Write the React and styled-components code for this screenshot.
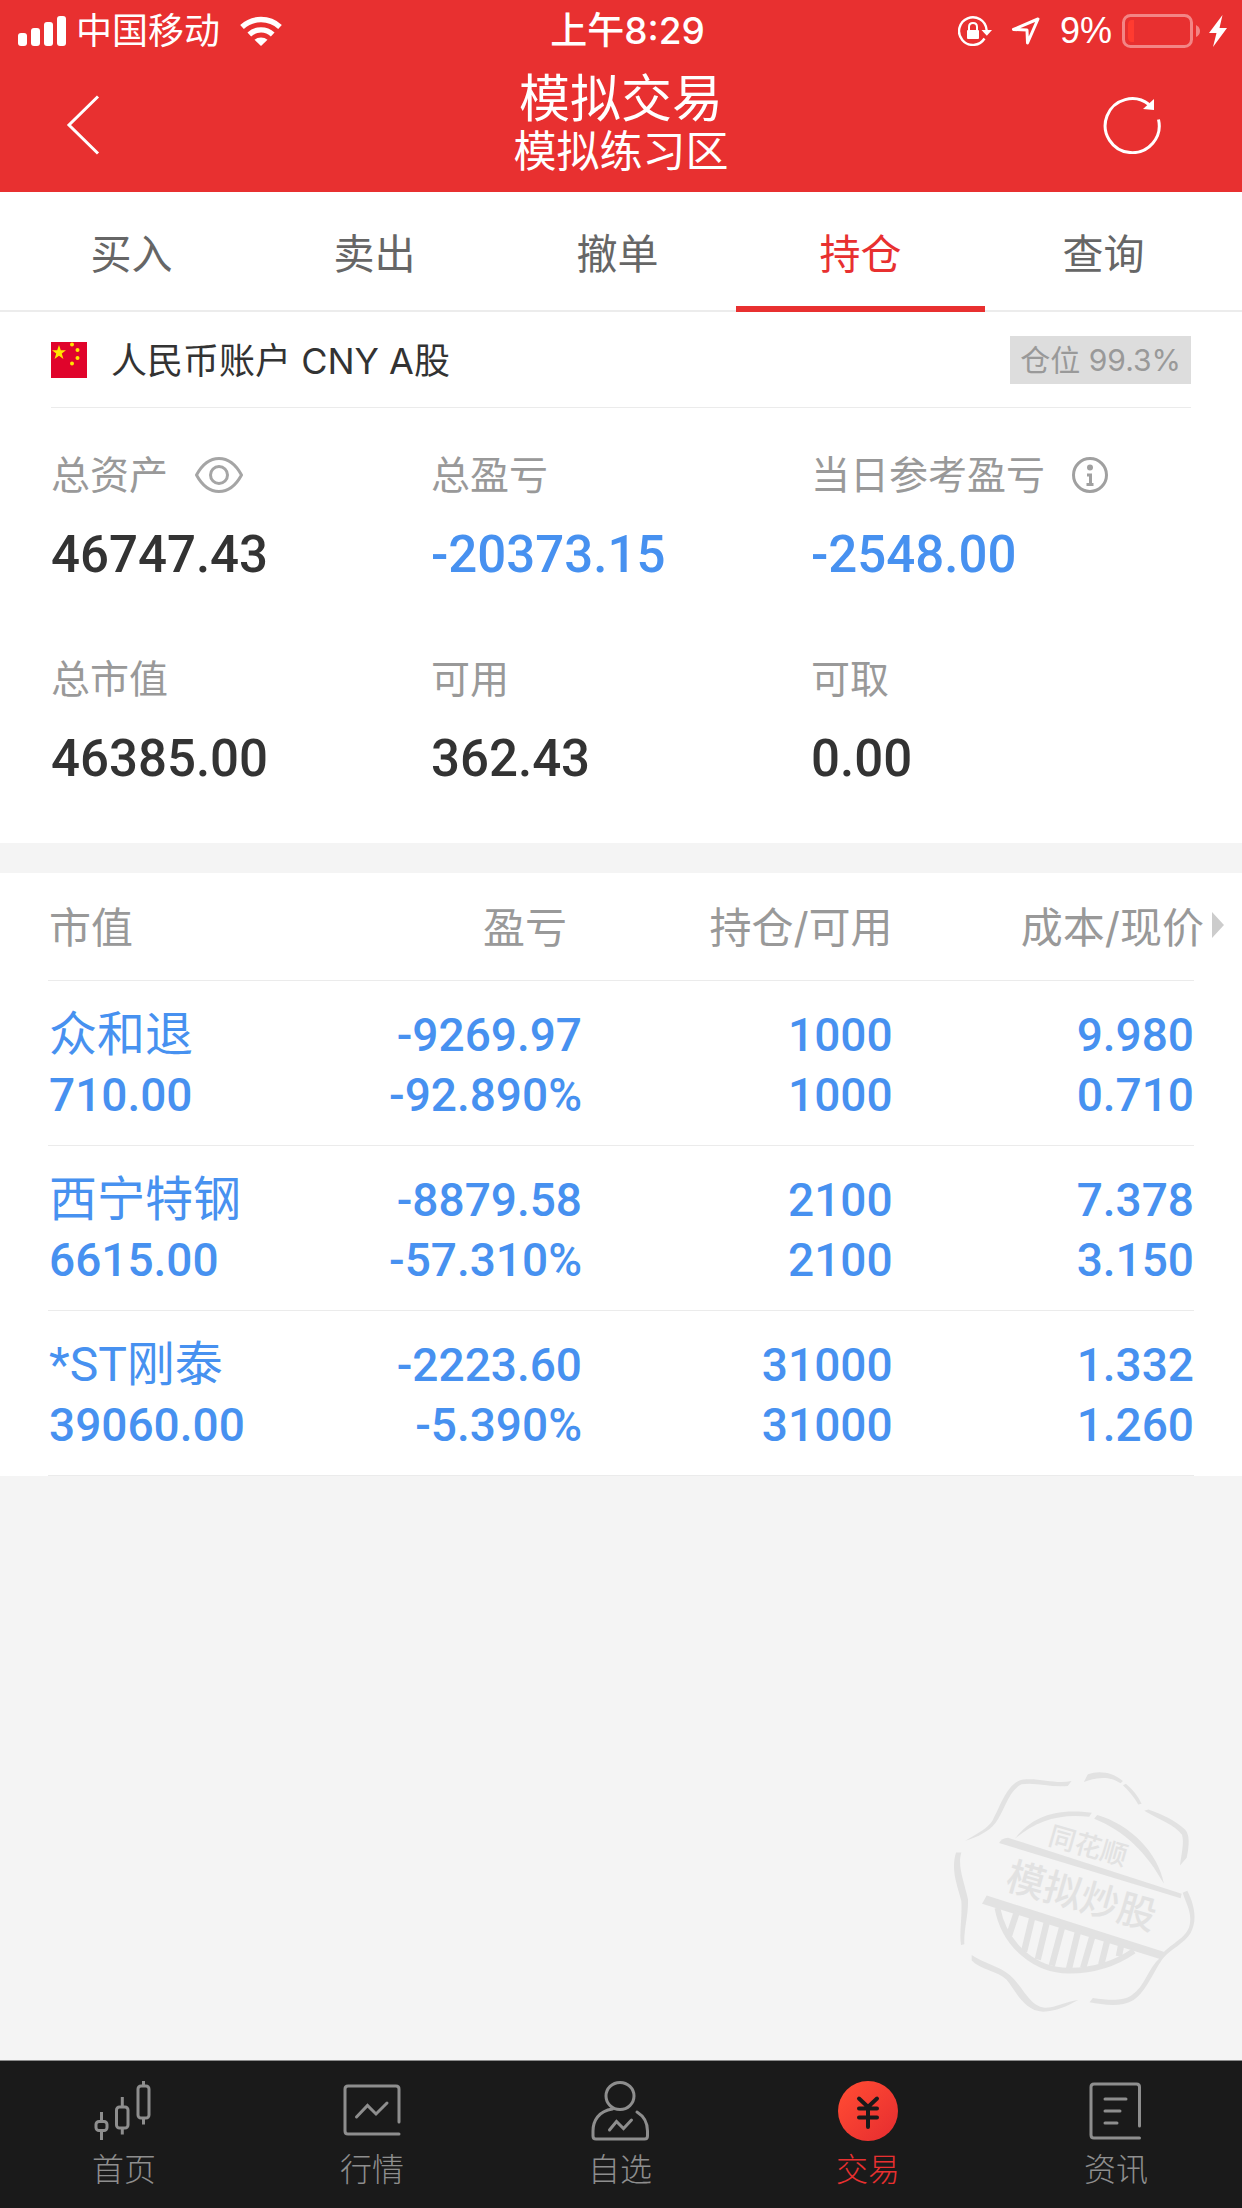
import React from 'react'
import styled, { createGlobalStyle } from 'styled-components'

const tabs = ['买入', '卖出', '撤单', '持仓', '查询']

const stocks = [
  { name: '众和退', value: '710.00', profit: '-9269.97', rate: '-92.890%', hold: '1000', usable: '1000', cost: '9.980', price: '0.710' },
  { name: '西宁特钢', value: '6615.00', profit: '-8879.58', rate: '-57.310%', hold: '2100', usable: '2100', cost: '7.378', price: '3.150' },
  { name: '*ST刚泰', value: '39060.00', profit: '-2223.60', rate: '-5.390%', hold: '31000', usable: '31000', cost: '1.332', price: '1.260' },
]

export default function App() {
  return (
    <>
      <GlobalStyle />
      <Page>
        <Header>
          <StatusBar />
          <TitleBar>
            <IconButton aria-label="返回">
              <BackIcon />
            </IconButton>
            <Titles>
              <Title>模拟交易</Title>
              <SubTitle>模拟练习区</SubTitle>
            </Titles>
            <IconButton aria-label="刷新" $right>
              <RefreshIcon />
            </IconButton>
          </TitleBar>
        </Header>

        <Tabs>
          {tabs.map((tab) => (
            <Tab key={tab} $active={tab === '持仓'}>{tab}</Tab>
          ))}
        </Tabs>

        <Summary>
          <Account>
            <Flag />
            <AccountName>人民币账户 CNY A股</AccountName>
            <Badge>仓位 99.3%</Badge>
          </Account>
          <Figures>
            <Figure label="总资产" value="46747.43" icon={<PlainButton aria-label="隐藏金额"><EyeIcon /></PlainButton>} />
            <Figure label="总盈亏" value="-20373.15" blue />
            <Figure label="当日参考盈亏" value="-2548.00" blue icon={<PlainButton aria-label="说明"><InfoIcon /></PlainButton>} />
            <Figure label="总市值" value="46385.00" />
            <Figure label="可用" value="362.43" />
            <Figure label="可取" value="0.00" />
          </Figures>
        </Summary>

        <Holdings>
          <Table>
            <thead>
              <tr>
                <HeadCell $width="22%" $left>市值</HeadCell>
                <HeadCell $width="24.6%" $gap="15px">盈亏</HeadCell>
                <HeadCell $width="27.1%">持仓/可用</HeadCell>
                <HeadCell>
                  <MoreButton>
                    成本/现价
                    <svg width="12" height="26" viewBox="0 0 12 26" fill="#ccc"><path d="M0 0L12 13L0 26Z" /></svg>
                  </MoreButton>
                </HeadCell>
              </tr>
            </thead>
            <tbody>
              {stocks.map((s) => (
                <tr key={s.name}>
                  <Cell $left>
                    <StockName>{s.name}</StockName>
                    <Num>{s.value}</Num>
                  </Cell>
                  <Cell><Num>{s.profit}</Num><Num>{s.rate}</Num></Cell>
                  <Cell><Num>{s.hold}</Num><Num>{s.usable}</Num></Cell>
                  <Cell><Num>{s.cost}</Num><Num>{s.price}</Num></Cell>
                </tr>
              ))}
            </tbody>
          </Table>
        </Holdings>

        <Rest>
          <Stamp />
        </Rest>

        <BottomNav>
          <NavItem href="#home"><HomeIcon />首页</NavItem>
          <NavItem href="#market"><MarketIcon />行情</NavItem>
          <NavItem href="#mine"><MineIcon />自选</NavItem>
          <NavItem href="#trade" $active><TradeIcon />交易</NavItem>
          <NavItem href="#news"><NewsIcon />资讯</NavItem>
        </BottomNav>
      </Page>
    </>
  )
}

function Figure({ label, value, icon, blue }) {
  return (
    <FigureItem>
      <FigureLabel>{label}{icon}</FigureLabel>
      <FigureValue $blue={blue}>{value}</FigureValue>
    </FigureItem>
  )
}

function StatusBar() {
  return (
    <Status>
      <StatusSide>
        <svg width="48" height="30" viewBox="0 0 48 30" fill="#fff">
          <rect x="0" y="17" width="9" height="13" rx="3" />
          <rect x="13" y="12" width="9" height="18" rx="3" />
          <rect x="26" y="6" width="9" height="24" rx="3" />
          <rect x="39" y="0" width="9" height="30" rx="3" />
        </svg>
        <Carrier>中国移动</Carrier>
        <svg width="42" height="30" viewBox="0 0 42 30" fill="none" stroke="#fff" strokeWidth="5.4">
          <path d="M2 11A28 28 0 0 1 40 11" />
          <path d="M9.300 18.500A17 17 0 0 1 32.700 18.500" />
          <path d="M21 30L14.500 23.800A10 10 0 0 1 27.500 23.800Z" fill="#fff" stroke="none" />
        </svg>
      </StatusSide>
      <Time>上午8:29</Time>
      <StatusSide $right>
        <svg width="34" height="30" viewBox="0 0 34 30" fill="none" stroke="#fff" strokeWidth="2.400">
          <path d="M28.600 14A13.800 13.800 0 1 0 26.500 22.500" />
          <path d="M23.500 14H34L28.800 19.800Z" fill="#fff" stroke="none" />
          <rect x="9" y="14" width="12" height="9" rx="1" fill="#fff" stroke="none" />
          <path d="M11 14.500V11Q11 7 15 7Q19 7 19 11V14.500" strokeWidth="2" />
        </svg>
        <Arrow width="28" height="28" viewBox="0 0 28 28" fill="none" stroke="#fff" strokeWidth="3" strokeLinejoin="round">
          <path d="M26 2L1.500 12.500L15 13L15.500 26Z" />
        </Arrow>
        <Percent>9%</Percent>
        <svg width="79" height="34" viewBox="0 0 79 34">
          <rect x="1.500" y="1.500" width="68" height="31" rx="7" fill="none" stroke="#f38585" strokeWidth="3" />
          <path d="M12 6V28H10Q6 28 6 23V11Q6 6 10 6Z" fill="#ff3b30" />
          <path d="M74 11Q78 13 78 17Q78 21 74 23Z" fill="#f38585" />
        </svg>
        <Bolt width="18" height="32" viewBox="0 0 18 32" fill="#fff">
          <path d="M13.500 0L0 18H7.500L4 32L18 13H10.500Z" />
        </Bolt>
      </StatusSide>
    </Status>
  )
}

const BackIcon = () => (
  <svg width="34" height="60" viewBox="0 0 34 60" fill="none" stroke="#fff" strokeWidth="3">
    <path d="M32 1.500L3 30L32 58.500" />
  </svg>
)

const RefreshIcon = () => (
  <svg width="58" height="58" viewBox="0 0 58 58" fill="none" stroke="#fff" strokeWidth="3">
    <path d="M55.500 23.500A27 27 0 1 1 46 8.500" />
    <path d="M51 3V14L40 13Z" fill="#fff" stroke="none" />
  </svg>
)

const EyeIcon = () => (
  <svg width="48" height="36" viewBox="0 0 48 36" fill="none" stroke="#a5a5a5" strokeWidth="3">
    <path d="M1.500 18C8 6 16 1.500 24 1.500S40 6 46.500 18C40 30 32 34.500 24 34.500S8 30 1.500 18Z" strokeLinejoin="round" />
    <circle cx="24" cy="18" r="8.500" />
  </svg>
)

const InfoIcon = () => (
  <svg width="36" height="36" viewBox="0 0 36 36" fill="none" stroke="#a0a0a0" strokeWidth="3">
    <circle cx="18" cy="18" r="16.500" />
    <circle cx="18" cy="10.500" r="3" fill="#a0a0a0" stroke="none" />
    <path d="M15 18H18.500V27M14.500 27.500H21.500" />
  </svg>
)

const Flag = () => (
  <svg width="36" height="36" viewBox="0 0 36 36">
    <rect width="36" height="36" fill="#e0042b" />
    <g fill="#ffe600">
      <path d="M8 3L9.800 8.200H15L10.800 11.400L12.400 17L8 13.700L3.600 17L5.200 11.400L1 8.200H6.200Z" />
      <circle cx="21" cy="2.500" r="2" />
      <circle cx="26.500" cy="8" r="2" />
      <circle cx="26.500" cy="16" r="2" />
      <circle cx="21" cy="21.500" r="2" />
    </g>
  </svg>
)

const NavSvg = ({ children }) => (
  <svg width="60" height="60" viewBox="0 0 60 60" fill="none" stroke="#8e8e8e" strokeWidth="3" strokeLinecap="round">
    {children}
  </svg>
)

const HomeIcon = () => (
  <NavSvg>
    <rect x="2" y="40.500" width="11" height="9" rx="3" />
    <path d="M7.500 31V40M7.500 50V59" strokeLinecap="butt" />
    <rect x="22.500" y="26" width="11.500" height="21" rx="3" />
    <path d="M28.300 16V26M28.300 47V53.500" strokeLinecap="butt" />
    <rect x="44" y="5" width="11" height="32" rx="3" />
    <path d="M49.500 0V5M49.500 37V43.500" strokeLinecap="butt" />
  </NavSvg>
)

const MarketIcon = () => (
  <NavSvg>
    <path d="M57 41V8Q57 5 54 5H6Q3 5 3 8V50Q3 53 6 53H57" />
    <path d="M14.500 36L25.500 24.500L34 33L45 22" />
  </NavSvg>
)

const MineIcon = () => (
  <NavSvg>
    <ellipse cx="30" cy="15" rx="14" ry="13.500" />
    <path d="M22.500 28C8.500 30 3 40 3 50V55Q3 58 6 58H54.500Q57.500 58 57.500 55V50C57.500 42 53.500 35 47 31" />
    <path d="M19.500 49L26.500 40.500L33.500 47.500L41.500 39" />
  </NavSvg>
)

const TradeIcon = () => (
  <NavSvg>
    <defs>
      <linearGradient id="trade" x1="0" y1="0" x2="1" y2="1">
        <stop offset="0.100" stopColor="#ff4a33" />
        <stop offset="0.900" stopColor="#e82f30" />
      </linearGradient>
    </defs>
    <circle cx="30" cy="30" r="30" fill="url(#trade)" stroke="none" />
    <path d="M21 17.500L30 26L39 17.500M21 27.500H39M21 36.500H39M30 27V46" stroke="#1a1a1a" strokeWidth="4" />
  </NavSvg>
)

const NewsIcon = () => (
  <NavSvg>
    <path d="M53.500 45V6Q53.500 3 50.500 3H8Q5 3 5 6V54Q5 57 8 57H53.500" />
    <path d="M19 18H40M19 30H34M19 42H31" />
  </NavSvg>
)

// round paper stamp in the lower right corner
const Stamp = () => (
  <svg width="242" height="242" viewBox="70 65 725 725" fill="#e2e2e2">
    <path d="M107 274C150 248 175 235 188 214C215 165 235 90 290 90C340 88 380 105 425 95L414 110C360 115 320 98 275 105C235 125 225 185 196 222C178 245 145 262 107 274Z" />
    <path d="M462 98L474 75C510 62 550 70 579 95L572 102C540 80 505 82 462 98Z" />
    <path d="M579 108L588 103C608 120 625 140 635 163L625 165C613 145 598 125 579 108Z" />
    <path d="M643 184L655 180C700 196 735 212 765 240C780 255 778 290 770 325L750 348C755 310 763 280 756 256C735 225 685 210 643 184Z" />
    <path d="M79 309H95C82 350 105 400 115 450C116 500 102 540 104 584L94 586C88 550 98 500 95 455C85 410 62 365 79 309Z" />
    <path d="M126 616C160 640 210 650 240 676C280 712 300 770 345 774C380 774 410 755 445 751C410 770 380 785 340 786C285 783 265 735 230 690C205 665 150 660 126 633Z" />
    <path d="M479 758L489 745C530 750 575 757 605 737C645 710 655 655 690 625L703 606C735 575 775 560 780 520C785 485 765 455 758 430L772 424C800 480 798 520 782 550C765 580 720 600 700 625C670 665 650 725 610 752C570 775 520 765 479 758Z" />
    <path d="M255 268C305 205 370 175 486 190L478 202C385 192 320 215 255 268Z" />
    <path d="M493 208L502 197C600 225 685 310 702 403C650 310 585 245 493 208Z" />
    <path d="M208 281Q215 266 235 265L755 433L752 446L208 281Z" />
    <path d="M157 463L171 438L708 609L690 628Z" />
    <path d="M203 475C225 590 320 665 420 663C500 663 560 640 612 604" fill="none" stroke="#e2e2e2" strokeWidth="17" />
    <path d="M262 485L238 558M309 498L283 606M353 510L324 630M399 525L366 648M446 540L417 660M489 555L460 655M533 570L514 645M575 580L567 620" fill="none" stroke="#e2e2e2" strokeWidth="19" />
    <StampText x="352" y="284" fontSize="80" transform="rotate(16 352 284)">同花顺</StampText>
    <StampText x="223" y="416" fontSize="115" transform="rotate(16 223 416)">模拟炒股</StampText>
  </svg>
)

const GlobalStyle = createGlobalStyle`
* {
    box-sizing: border-box;
}
body {
    margin: 0;
    font-family: Inter, "Noto Sans CJK SC", sans-serif;
}
svg {
    display: block;
    flex-shrink: 0;
}
button {
    border: none;
    background: none;
    padding: 0;
    font: inherit;
    color: inherit;
}
`

const Page = styled.div`
display: flex;
flex-direction: column;
min-height: 100vh;
background-color: #f4f4f4;
`

const Header = styled.header`
background-color: #e83030;
color: #fff;
`

const Status = styled.div`
display: grid;
grid-template-columns: 1fr auto 1fr;
align-items: center;
height: 62px;
padding: 0 15px 0 18px;
font-size: 36px;
line-height: 60px;
`

const StatusSide = styled.div`
display: flex;
align-items: center;
justify-content: ${(p) => (p.$right ? 'flex-end' : 'flex-start')};
`

const Carrier = styled.span`
margin: 0 20px 0 10px;
`

const Time = styled.span`
padding-left: 10px;
font-size: 37px;
font-weight: 500;
`

const Arrow = styled.svg`
margin-left: 20px;
`

const Percent = styled.span`
margin: 0 10px 0 20px;
font-family: "Liberation Sans", sans-serif;
`

const Bolt = styled.svg`
margin-left: 8px;
`

const TitleBar = styled.div`
display: grid;
grid-template-columns: 1fr auto 1fr;
align-items: center;
height: 130px;
padding: 0 66px 4px;
`

const IconButton = styled.button`
justify-self: ${(p) => (p.$right ? 'end' : 'start')};
margin-right: ${(p) => (p.$right ? '15px' : '0')};
`

const Titles = styled.div`
text-align: center;
line-height: 52px;
`

const Title = styled.h1`
margin: 0;
font-size: 51px;
font-weight: 400;
`

const SubTitle = styled.p`
margin: 0;
font-size: 43px;
`

const Tabs = styled.nav`
display: flex;
height: 120px;
padding: 0 17px 0 10px;
background-color: #fff;
border-bottom: 2px solid #ececec;
`

const Tab = styled.button`
position: relative;
flex: 1;
font-size: 41px;
color: ${(p) => (p.$active ? '#e83030' : '#666')};

&::after {
    content: "";
    display: ${(p) => (p.$active ? 'block' : 'none')};
    position: absolute;
    left: -3px;
    right: -3px;
    bottom: -2px;
    height: 6px;
    background-color: #e83030;
}
`

const Summary = styled.section`
padding: 0 51px 36px;
background-color: #fff;
`

const Account = styled.div`
display: flex;
align-items: center;
height: 96px;
border-bottom: 1px solid #ebebeb;
`

const AccountName = styled.span`
flex: 1;
margin-left: 24px;
padding-bottom: 3px;
font-size: 36px;
color: #333;
`

const Badge = styled.span`
padding: 0 10px;
background-color: #ddd;
font-size: 30px;
line-height: 48px;
color: #999;
`

const Figures = styled.div`
display: grid;
grid-template-columns: 1fr 1fr 1fr;
row-gap: 44px;
padding: 27px 0 8px;
`

const FigureItem = styled.div`
line-height: 80px;
`

const FigureLabel = styled.div`
display: flex;
align-items: center;
gap: 27px;
font-size: 39px;
color: #999;
`

const PlainButton = styled.button`
display: block;
`

const FigureValue = styled.div`
font-family: Roboto, sans-serif;
font-size: 51px;
font-weight: 500;
color: ${(p) => (p.$blue ? '#4791f0' : '#333')};
`

const Holdings = styled.section`
margin-top: 30px;
padding: 0 48px;
background-color: #fff;
`

const Table = styled.table`
width: 100%;
table-layout: fixed;
border-collapse: collapse;
`

const HeadCell = styled.th`
width: ${(p) => p.$width || 'auto'};
height: 107px;
padding: 0 ${(p) => p.$gap || '0'} 3px 1px;
border-bottom: 1px solid #ebebeb;
font-size: 42px;
font-weight: 400;
text-align: ${(p) => (p.$left ? 'left' : 'right')};
white-space: nowrap;
color: #999;
`

const MoreButton = styled.button`
display: inline-flex;
align-items: center;
gap: 8px;
margin-right: -30px;
`

const Cell = styled.td`
height: 165px;
padding: 4px 0 0 1px;
border-bottom: 1px solid #ebebeb;
line-height: 60px;
text-align: ${(p) => (p.$left ? 'left' : 'right')};
color: #4791f0;
`

const StockName = styled.div`
font-family: Roboto, "Noto Sans CJK SC", sans-serif;
font-size: 48px;
`

const Num = styled.div`
font-family: Roboto, sans-serif;
font-size: 46px;
font-weight: 500;
`

const Rest = styled.div`
display: flex;
flex: 1;
align-items: flex-end;
justify-content: flex-end;
padding: 47px;
`

const StampText = styled.text`
font-family: "Noto Sans CJK SC", sans-serif;
font-weight: 500;
`

const BottomNav = styled.nav`
display: flex;
height: 148px;
padding-right: 2px;
border-top: 1px solid #8c8c8c;
background-color: #1a1a1a;
`

const NavItem = styled.a`
display: flex;
flex: 1;
flex-direction: column;
align-items: center;
padding-top: 20px;
font-size: 32px;
font-weight: 300;
line-height: 58px;
text-decoration: none;
color: ${(p) => (p.$active ? '#e83030' : '#8e8e8e')};
`
